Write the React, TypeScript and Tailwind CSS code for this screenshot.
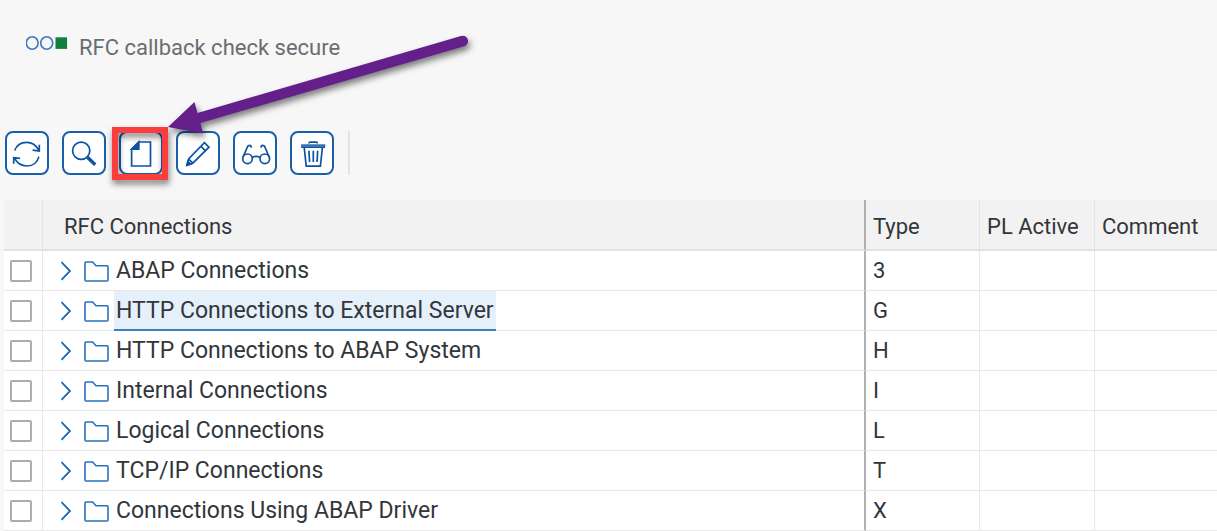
import type { ReactNode } from "react";

type Connection = { name: string; type: string; selected?: boolean };

const connections: Connection[] = [
  { name: "ABAP Connections", type: "3" },
  { name: "HTTP Connections to External Server", type: "G", selected: true },
  { name: "HTTP Connections to ABAP System", type: "H" },
  { name: "Internal Connections", type: "I" },
  { name: "Logical Connections", type: "L" },
  { name: "TCP/IP Connections", type: "T" },
  { name: "Connections Using ABAP Driver", type: "X" },
];

function ToolButton({ label, children }: { label: string; children: ReactNode }) {
  return (
    <button
      type="button"
      aria-label={label}
      className="size-11 shrink-0 rounded-lg border-2 border-[#1a5fa9] bg-white text-[#0d54a0]"
    >
      <svg
        viewBox="2 2 40 40"
        className="size-10"
        fill="none"
        stroke="currentColor"
        strokeWidth="1.7"
        aria-hidden="true"
      >
        {children}
      </svg>
    </button>
  );
}

function StatusIcon() {
  return (
    <svg viewBox="0 0 42 15" className="h-[15px] w-[42px] shrink-0" aria-hidden="true">
      <ellipse cx="6.2" cy="7" rx="5.9" ry="6.2" fill="none" stroke="#3f78bd" strokeWidth="1.6" />
      <ellipse cx="20.7" cy="7" rx="6" ry="6.2" fill="none" stroke="#3f78bd" strokeWidth="1.6" />
      <rect x="29.5" y="1.3" width="11.6" height="11.6" fill="#107e3e" />
    </svg>
  );
}

function Chevron() {
  return (
    <svg viewBox="0 0 12 20" className="h-5 w-3" fill="none" stroke="#1f68b8" strokeWidth="1.8" aria-hidden="true">
      <path d="M1.5 1.2 10 10 1.5 18.8" />
    </svg>
  );
}

function Folder() {
  return (
    <svg viewBox="0 0 25 22" className="h-[22px] w-[25px] shrink-0" fill="none" stroke="#2a70bd" strokeWidth="1.6" aria-hidden="true">
      <path d="M1 3Q1 2 2 2H8.6L11.9 5.8H23Q24 5.8 24 6.8V20Q24 21 23 21H2Q1 21 1 20Z" />
    </svg>
  );
}

export default function App() {
  const head = "h-[51px] border-b-2 border-b-[#e2e2e2] bg-[#f2f2f2] p-0 pt-1 pl-[7px] text-left font-normal";
  const cell = "h-10 border-b border-[#e8e8e8] bg-white p-0";
  return (
    <div className="min-h-screen overflow-hidden bg-[#f7f7f7] font-['Roboto','Liberation_Sans',sans-serif] text-[22px] leading-7 text-[#32363a]">
      <header className="flex h-[131px] items-start pt-[34px] pl-[26px] text-[#6a6d70]">
        <span className="pt-0.5">
          <StatusIcon />
        </span>
        <p className="pl-[11px]">RFC callback check secure</p>
      </header>

      <div role="toolbar" aria-label="Connection actions" className="flex h-[69px] items-start gap-[13px] pl-[5px]">
        <ToolButton label="Refresh">
          <path d="M9.7 19.5C11.5 14.3 16 11.3 21.6 11.3C27 11.3 31 14 33.8 19.2M34.3 13.8V20L27.6 19.2M33.9 25.6C32.5 31.3 28 35 22 35C16.5 35 12 32.3 9.2 26.7M8.7 32.8V26.6L15 27.4" />
        </ToolButton>
        <ToolButton label="Search">
          <circle cx="19.2" cy="19.8" r="8.6" />
          <path d="M25.4 26.2 33.2 33.8" strokeWidth="3.4" />
        </ToolButton>
        <div className="relative">
          <ToolButton label="Create">
            <path d="M19.8 11H31.5V35H12.6V18.2Z" />
            <path d="M19.8 11V18.2H12.6Z" fill="currentColor" />
          </ToolButton>
          <div className="pointer-events-none absolute -top-1 -left-[7px] h-[53px] w-14 border-[6px] border-[#fb3d3d] drop-shadow-[1px_4px_3px_rgba(0,0,0,0.5)]" />
          <svg
            viewBox="0 0 310 110"
            className="pointer-events-none absolute -top-[99px] left-[45px] z-10 h-[110px] w-[310px] max-w-none drop-shadow-[2px_4px_3px_rgba(0,0,0,0.5)]"
            aria-hidden="true"
          >
            <path d="M4 95 30.5 70 33.5 81 297 4A5.3 5.3 0 0 1 300.3 14.3L36.5 91 39 101.5Z" fill="#651f8b" />
          </svg>
        </div>
        <ToolButton label="Change">
          <path d="M28.4 11.6 33 16.2 16.8 32.2 11 34.2 12.6 28ZM24.8 15.2 29.4 19.8M12.6 28 16.8 32.2" />
          <path d="M11 34.2 11.8 30.6 14.6 33Z" fill="currentColor" />
        </ToolButton>
        <ToolButton label="Display">
          <circle cx="14.5" cy="27.8" r="4.8" />
          <circle cx="31.8" cy="27.8" r="4.8" />
          <path d="M19 26.4Q23.1 24.4 27.3 26.4M10.1 26.2 14.6 15.5Q15.2 14.3 16.5 14.3Q18.2 14.3 18.4 16.6M36.2 26.2 31.7 15.5Q31.1 14.3 29.8 14.3Q28.1 14.3 27.9 16.6" />
        </ToolButton>
        <ToolButton label="Delete">
          <path d="M11.2 15.2H35.2" strokeWidth="3.6" />
          <path d="M11.8 15.1H34.6" stroke="#7fa6d0" strokeWidth="0.8" />
          <path d="M19 12.6Q19 11.2 20.2 11.2H26.2Q27.4 11.2 27.4 12.6M14.2 16.5 16.2 35.2H30.4L32.4 16.5" />
          <path d="M18.9 19.8 19.6 31M23.3 19.8V31M27.7 19.8 27 31" />
        </ToolButton>
        <div className="ml-px h-11 w-0.5 bg-[#e3e3e3]" />
      </div>

      <div className="pl-1">
        <table className="w-full table-fixed border-separate border-spacing-0">
          <colgroup>
            <col className="w-[39px]" />
            <col />
            <col className="w-[114px]" />
            <col className="w-[115px]" />
            <col className="w-[122px]" />
          </colgroup>
          <thead>
            <tr>
              <th className={`${head} border-r border-r-[#e4e4e4]`} aria-label="Selection" />
              <th className={`${head} border-r-2 border-r-[#b0b0b0]`}>
                <span className="pl-[14px]">RFC Connections</span>
              </th>
              <th className={`${head} border-r border-r-[#e4e4e4]`}>Type</th>
              <th className={`${head} border-r border-r-[#e4e4e4]`}>PL Active</th>
              <th className={head}>Comment</th>
            </tr>
          </thead>
          <tbody>
            {connections.map((c) => (
              <tr key={c.type}>
                <td className={`${cell} border-r`}>
                  <input
                    type="checkbox"
                    aria-label={`Select ${c.name}`}
                    className="ml-1.5 block size-[22px] appearance-none rounded-xs border-2 border-[#a9aeb3] bg-white"
                  />
                </td>
                <td className={`${cell} border-r-2 border-r-[#b0b0b0]`}>
                  <div className="flex h-[39px] items-center pl-[17px]">
                    <button type="button" aria-label={`Expand ${c.name}`} className="mr-3">
                      <Chevron />
                    </button>
                    <Folder />
                    <span
                      className={
                        c.selected
                          ? "ml-[5px] -mb-px flex h-10 items-center border-b-2 border-[#3f7fc1] bg-[#e5f0fa] px-0.5 pt-px text-[23px]"
                          : "ml-[5px] px-0.5 text-[23px]"
                      }
                    >
                      {c.name}
                    </span>
                  </div>
                </td>
                <td className={`${cell} border-r pl-[7px]`}>{c.type}</td>
                <td className={`${cell} border-r`} />
                <td className={cell} />
              </tr>
            ))}
          </tbody>
        </table>
      </div>
    </div>
  );
}
